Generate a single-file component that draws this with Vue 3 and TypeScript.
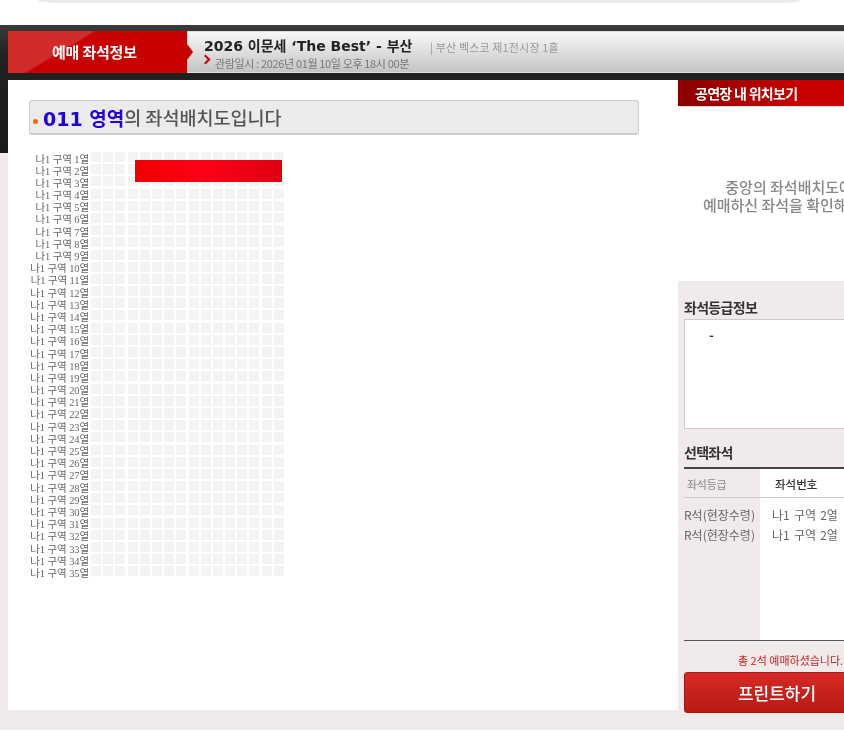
<script setup lang="ts">
const rowLabels = Array.from({ length: 35 }, (_, i) => `나1 구역 ${i + 1}열`);
const cellCount = 35 * 16;

const grades = ['R석(현장수령)', 'R석(현장수령)'];
const seats = ['나1 구역 2열', '나1 구역 2열'];
</script>

<template>
  <div class="page">
    <div class="top-pill"></div>
    <div class="frame">
      <header class="head">
        <div class="head-tab">예매 좌석정보</div>
        <div class="head-info">
          <div class="show">
            <h1 class="show-title">2026 이문세 ‘The Best’ - 부산</h1>
            <p class="show-date">관람일시 : 2026년 01월 10일 오후 18시 00분</p>
          </div>
          <span class="venue">| 부산 벡스코 제1전시장 1홀</span>
        </div>
      </header>

      <div class="body">
        <main class="main">
          <div class="zone-title">
            <span class="dot"></span>
            <strong class="zone-name">011 영역</strong><span>의 좌석배치도입니다</span>
          </div>
          <div class="seatmap">
            <div class="row-labels">
              <div v-for="label in rowLabels" :key="label" class="row-label">{{ label }}</div>
            </div>
            <div class="cells">
              <i v-for="n in cellCount" :key="n" class="cell"></i>
              <div class="picked"></div>
            </div>
          </div>
        </main>

        <aside class="side">
          <div class="side-top">
            <h2 class="side-tab">공연장 내 위치보기</h2>
            <p class="side-note">중앙의 좌석배치도에서<br />예매하신 좌석을 확인해주세요</p>
          </div>
          <div class="side-body">
            <h3 class="side-head">좌석등급정보</h3>
            <div class="grade-box">-</div>
            <h3 class="side-head picked-head">선택좌석</h3>
            <div class="picked-table">
              <div class="col-grade">
                <div class="th th-grade">좌석등급</div>
                <div v-for="(g, i) in grades" :key="i" class="td">{{ g }}</div>
              </div>
              <div class="col-seat">
                <div class="th th-seat">좌석번호</div>
                <div v-for="(s, i) in seats" :key="i" class="td td-seat">{{ s }}</div>
              </div>
            </div>
            <p class="total">총 2석 예매하셨습니다.</p>
            <button class="print">프린트하기</button>
          </div>
        </aside>
      </div>
    </div>
  </div>
</template>

<style>
html,
body {
  overflow: hidden;
  background: #fff;
}
</style>

<style scoped>
.page {
  width: 844px;
  height: 750px;
  overflow: hidden;
  background: #fff;
  font-family: "Noto Sans CJK KR", sans-serif;
  filter: blur(0.3px);
}

.top-pill {
  width: 762px;
  height: 3px;
  margin: 0 0 22px 38px;
  background: #e9e9ee;
  border-radius: 0 0 20px 20px / 0 0 3px 3px;
}

.frame {
  height: 705px;
  box-sizing: border-box;
  padding-top: 6px;
  background:
    linear-gradient(#3a3a3a 0, #222 30px, #1a1a1a 128px) no-repeat 0 0 / 100% 128px,
    #f0ebea;
}

.head {
  display: flex;
  height: 42px;
  margin: 0 0 7px 8px;
  border-top: 1px solid #ddd;
  border-bottom: 1px solid #ddd;
  box-sizing: border-box;
  background: linear-gradient(#f8f8f8, #c4c4c4);
}

.head-tab {
  position: relative;
  width: 179px;
  margin: -1px 0;
  line-height: 42px;
  padding-left: 44px;
  box-sizing: border-box;
  color: #fff;
  font-size: 15px;
  font-weight: 700;
  letter-spacing: -0.2px;
  background:
    linear-gradient(149deg, #d02c2c 0 34%, rgba(208, 44, 44, 0) 36%),
    #c80000;
}

.head-tab::after {
  content: "";
  position: absolute;
  top: 13px;
  right: -6px;
  border-left: 6px solid #c80000;
  border-top: 8px solid transparent;
  border-bottom: 8px solid transparent;
}

.head-info {
  display: flex;
  padding-left: 17px;
}

.show {
  width: 226px;
}

.show-title {
  margin: 5px 0 0;
  font-family: "DejaVu Sans", "Noto Sans CJK KR", sans-serif;
  font-size: 14px;
  line-height: 18px;
  font-weight: 700;
  color: #222;
  white-space: nowrap;
}

.show-date {
  position: relative;
  margin: 0;
  padding-left: 11px;
  font-size: 11px;
  line-height: 16px;
  letter-spacing: -0.35px;
  color: #777;
  white-space: nowrap;
}

.show-date::before {
  content: "";
  position: absolute;
  left: -2px;
  top: 1px;
  width: 5px;
  height: 5px;
  border-top: 2px solid #c00;
  border-right: 2px solid #c00;
  transform: rotate(45deg);
}

.venue {
  margin-top: 6px;
  font-size: 11px;
  line-height: 18px;
  letter-spacing: 0.15px;
  color: #999;
  white-space: nowrap;
}

.body {
  display: flex;
  height: 630px;
  padding-left: 8px;
}

.main {
  width: 670px;
  flex: none;
  box-sizing: border-box;
  padding: 20px 39px 0 21px;
  background: #fff;
}

.zone-title {
  display: flex;
  align-items: center;
  height: 35px;
  box-sizing: border-box;
  padding-left: 13px;
  position: relative;
  background: #ebebeb;
  border: 1px solid #ccc;
  border-bottom-width: 2px;
  border-radius: 3px;
  font-size: 18.5px;
  font-weight: 500;
  color: #555;
  white-space: pre;
}

.dot {
  position: absolute;
  left: 3px;
  top: 18px;
  width: 5px;
  height: 5px;
  border-radius: 50%;
  background: #f60;
}

.zone-name {
  font-family: "DejaVu Sans", "Noto Sans CJK KR", sans-serif;
  font-size: 19px;
  font-weight: 700;
  color: #2200dd;
}

.seatmap {
  display: flex;
  margin-top: 17px;
}

.row-labels {
  width: 60px;
  padding: 1.5px 2px 0 0;
  text-align: right;
}

.row-label {
  height: 12.2px;
  line-height: 12.2px;
  font-family: "Liberation Serif", "Noto Sans CJK KR", serif;
  font-size: 10.5px;
  letter-spacing: -0.1px;
  color: #666;
  white-space: nowrap;
}

.cells {
  position: relative;
  display: grid;
  grid-template-columns: repeat(16, 12.2px);
  grid-auto-rows: 12.2px;
}

.cell {
  display: block;
  width: 10px;
  height: 10px;
  background: #f4f4f4;
}

.picked {
  position: absolute;
  left: 44px;
  top: 8px;
  width: 147px;
  height: 22px;
  background: linear-gradient(100deg, #f00000, #ff0018 45%, #dc0010);
}

.side {
  width: 240px;
  flex: none;
  display: flex;
  flex-direction: column;
}

.side-top {
  flex: none;
  height: 201px;
  background: #fff;
}

.side-tab {
  margin: 0;
  height: 27px;
  padding-left: 17px;
  line-height: 26px;
  font-size: 14px;
  font-weight: 700;
  letter-spacing: -0.7px;
  color: #fff;
  background: linear-gradient(90deg, #8a0000, #c80000 50%);
  border-bottom: 1px solid #ddd;
  box-sizing: border-box;
}

.side-note {
  margin: 71px 0 0;
  padding-right: 4px;
  text-align: center;
  font-size: 15px;
  line-height: 18px;
  font-weight: 500;
  color: #888;
  white-space: nowrap;
}

.side-body {
  flex: 1;
  padding: 19px 0 0 6px;
}

.side-head {
  margin: 0;
  height: 19px;
  line-height: 15px;
  font-size: 14px;
  font-weight: 700;
  letter-spacing: -0.7px;
  color: #333;
}

.grade-box {
  width: 220px;
  height: 110px;
  box-sizing: border-box;
  padding: 5px 24px;
  font-size: 13px;
  font-weight: 700;
  line-height: 20px;
  color: #333;
  background: #fff;
  border: 1px solid #ccc;
}

.picked-head {
  margin-top: 17px;
  height: 21px;
  line-height: 13px;
}

.picked-table {
  display: flex;
  width: 220px;
  height: 174px;
  box-sizing: border-box;
  border-top: 2px solid #444;
  border-bottom: 1px solid #555;
}

.col-grade {
  width: 76px;
  flex: none;
}

.col-seat {
  flex: 1;
  background: #fff;
}

.th {
  height: 29px;
  line-height: 30px;
  box-sizing: border-box;
  border-bottom: 1px solid #ccc;
  font-size: 11px;
  letter-spacing: -0.3px;
  margin-bottom: 7px;
  white-space: nowrap;
}

.th-grade {
  padding-left: 3px;
  color: #888;
}

.th-seat {
  padding-left: 15px;
  font-size: 11.5px;
  font-weight: 500;
  letter-spacing: 0;
  color: #333;
}

.td {
  height: 20px;
  line-height: 20px;
  font-size: 12px;
  color: #666;
  white-space: nowrap;
}

.td-seat {
  padding-left: 12px;
  word-spacing: 1.5px;
}

.total {
  margin: 10px 0 0 54px;
  line-height: 18px;
  font-size: 11px;
  color: #d02020;
  white-space: nowrap;
}

.print {
  display: block;
  width: 186px;
  height: 41px;
  margin-top: 3px;
  padding: 0;
  border: 1px solid #a81818;
  border-radius: 3px;
  background: linear-gradient(#d62a24, #b81a16);
  color: #fff;
  font-family: inherit;
  font-size: 17px;
  font-weight: 500;
  text-align: center;
}
</style>
